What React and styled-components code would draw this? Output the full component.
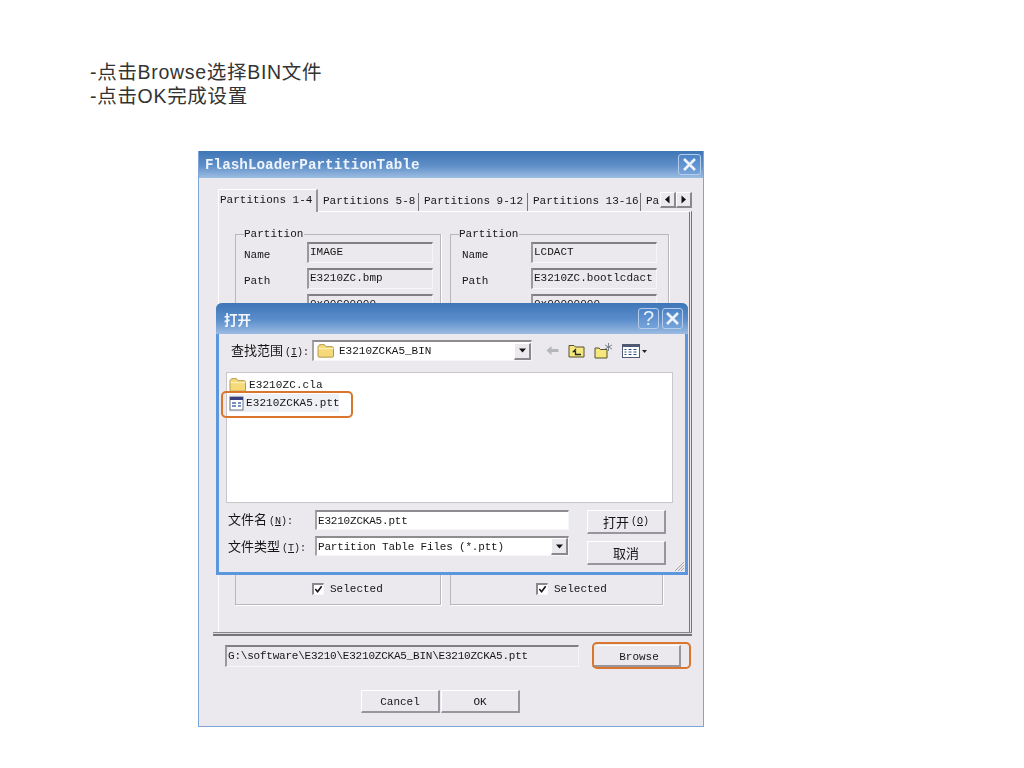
import React from 'react';
import styled, { createGlobalStyle, css } from 'styled-components';

const GlobalStyle = createGlobalStyle`
  html, body {
    margin: 0;
    padding: 0;
    background: #fff;
  }
`;

const mono = `"Liberation Mono", "Noto Sans CJK SC", monospace`;

const Page = styled.div`
  width: 1024px;
  height: 768px;
  padding: 60px 0 0 90px;
  box-sizing: border-box;
  overflow: hidden;
`;

const Instructions = styled.div`
  font-family: "Liberation Sans", "Noto Sans CJK SC", sans-serif;
  font-size: 19.5px;
  line-height: 24px;
  letter-spacing: 0.7px;
  color: #333;
`;

const Window = styled.div`
  position: relative;
  width: 506px;
  height: 576px;
  margin: 43px 0 0 108px;
  box-sizing: border-box;
  border: 1px solid #7da5d8;
  border-top: 0;
  background: #ebe9ed;
  font-family: ${mono};
  font-size: 11px;
  color: #151515;
  filter: blur(0.25px);
`;

const TitleBar = styled.div`
  display: flex;
  align-items: center;
  justify-content: space-between;
  height: 27px;
  padding: 0 2px 0 6px;
  background: linear-gradient(#3f76b6, #5f8fc8 55%, #9dbde2);
`;

const TitleText = styled.span`
  font-size: 14.3px;
  font-weight: bold;
  color: #eef4fb;
`;

const CaptionButton = styled.div`
  display: flex;
  align-items: center;
  justify-content: center;
  width: ${props => props.$width || 21}px;
  height: 21px;
  box-sizing: border-box;
  border: 1px solid #b4cdea;
  border-radius: 3px;
  background: linear-gradient(#4b83c8, #77a3da);
  color: #e8f0fa;
  font-family: "Liberation Sans", sans-serif;
  font-size: 20px;
`;

const TabStrip = styled.div`
  display: flex;
  align-items: flex-end;
  height: 23px;
  margin: 10px 0 0 19px;
  width: 474px;
`;

const Tab = styled.div`
  flex: none;
  width: ${props => props.$width}px;
  height: 18px;
  box-sizing: border-box;
  padding-left: 5px;
  line-height: 17px;
  white-space: nowrap;
  overflow: hidden;
  border-right: ${props => props.$last ? '0' : '1px solid #77757a'};
  ${props => props.$active && css`
    height: 23px;
    padding-left: 1px;
    line-height: 21px;
    margin-bottom: -1px;
    position: relative;
    background: #ebe9ed;
    border-top: 1px solid #fff;
    border-left: 1px solid #fff;
    border-right: 2px solid #98969c;
  `}
`;

const TabScroller = styled.div`
  display: flex;
  margin-left: auto;
  margin-bottom: 3px;
`;

const ScrollButton = styled.div`
  display: flex;
  align-items: center;
  justify-content: center;
  width: 16px;
  height: 16px;
  box-sizing: border-box;
  background: #ebe9ed;
  border-right: 2px solid #8a888d;
  border-bottom: 2px solid #8a888d;
  border-top: 1px solid #fff;
  border-left: 1px solid #fff;
`;

const TabPanel = styled.div`
  height: 421px;
  width: 474px;
  margin-left: 19px;
  box-sizing: border-box;
  padding: 15px 0 0 16px;
  border-top: 1px solid #fff;
  border-left: 1px solid #fff;
  border-right: 3px double #77757a;
`;

const PanelEdge = styled.div`
  width: 479px;
  height: 4px;
  margin-left: 14px;
  box-sizing: border-box;
  border-top: 1px solid #8a888c;
  border-bottom: 2px solid #77757a;
  background: #d8d6da;
`;

const GroupGrid = styled.div`
  display: grid;
  grid-template-columns: 206px 219px;
  grid-template-rows: 190px 183px;
  column-gap: 9px;
  row-gap: 5px;
`;

const GroupBox = styled.fieldset`
  margin: 0;
  padding: 0 8px;
  min-width: 0;
  border: 1px solid #b9b7bc;
  box-shadow: 1px 1px 0 #fff;
  ${props => props.$narrow && css`
    width: 213px;
    box-sizing: border-box;
  `}
`;

const Legend = styled.legend`
  padding: 0 1px 0 0;
  font-size: 11px;
  line-height: 14px;
`;

const FieldGrid = styled.div`
  display: grid;
  grid-template-columns: ${props => props.$labelWidth}px 126px;
  grid-auto-rows: 21px;
  row-gap: 5px;
  margin-top: 1px;
`;

const FieldLabel = styled.span`
  padding: 6px 0 0 ${props => props.$indent || 0}px;
  line-height: 14px;
`;

const Sunken = styled.div`
  box-sizing: border-box;
  padding-left: 1px;
  line-height: 17px;
  white-space: nowrap;
  overflow: hidden;
  border-top: 2px solid #808082;
  border-left: 2px solid #9a9a9c;
  border-right: 1px solid #f6f6f8;
  border-bottom: 1px solid #f6f6f8;
  background: #ebe9ed;
`;

const SelectedRow = styled.div`
  display: flex;
  align-items: center;
  gap: 6px;
  margin: 160px 0 0 ${props => props.$indent}px;
`;

const CheckBox = styled.div`
  display: flex;
  align-items: center;
  justify-content: center;
  width: 12px;
  height: 12px;
  box-sizing: border-box;
  border-top: 2px solid #8a8a8e;
  border-left: 2px solid #8a8a8e;
  border-right: 1px solid #f6f6f8;
  border-bottom: 1px solid #f6f6f8;
  background: #fff;
`;

const PathRow = styled.div`
  display: flex;
  align-items: flex-start;
  margin: 9px 0 0 26px;
`;

const PathInput = styled(Sunken)`
  width: 354px;
  height: 22px;
  line-height: 18px;
  letter-spacing: -0.22px;
`;

const ClassicButton = styled.div`
  display: flex;
  align-items: center;
  justify-content: center;
  width: ${props => props.$width}px;
  height: ${props => props.$height}px;
  box-sizing: border-box;
  padding-top: 2px;
  padding-left: ${props => props.$shift || 0}px;
  border-top: 1px solid #fff;
  border-left: 1px solid #fff;
  border-right: 2px solid #98969c;
  border-bottom: 2px solid #98969c;
  background: #ebe9ed;
  ${props => props.$cjk && css`
    padding-top: 0;
    font-size: 13px;
  `}
`;

const BrowseWrap = styled.div`
  position: relative;
  margin-left: 13px;
`;

const Highlight = styled.div`
  position: absolute;
  left: ${props => props.$left}px;
  top: ${props => props.$top}px;
  width: ${props => props.$width}px;
  height: ${props => props.$height}px;
  box-sizing: border-box;
  border: 2.5px solid #d9752c;
  border-radius: 5px;
`;

const ActionRow = styled.div`
  display: flex;
  gap: 1px;
  margin: 23px 0 0 162px;
`;

const Dialog = styled.div`
  position: absolute;
  left: 17px;
  top: 152px;
  width: 472px;
  height: 272px;
  box-sizing: border-box;
  border: 3px solid #5b97dc;
  border-top: 0;
  border-radius: 6px 6px 0 0;
  background: #ebe9ed;
  font-size: 11px;
`;

const DialogTitle = styled(TitleBar)`
  height: 31px;
  margin: 0 -3px;
  padding: 0 5px 0 8px;
  border-radius: 6px 6px 0 0;
  background: linear-gradient(#3f76b8, #5b8ecb 55%, #9bbbe2);
`;

const DialogTitleText = styled.span`
  font-family: "Noto Sans CJK SC", sans-serif;
  font-size: 13.5px;
  font-weight: bold;
  color: #f2f6fb;
`;

const CaptionGroup = styled.div`
  display: flex;
  gap: 3px;
`;

const LookInRow = styled.div`
  display: flex;
  align-items: center;
  height: 21px;
  margin: 6px 0 0 12px;
`;

const CjkLabel = styled.span`
  width: ${props => props.$width}px;
  flex: none;
  padding-bottom: ${props => props.$lift || 0}px;
  font-size: 13px;
  white-space: nowrap;
`;

const Accel = styled.span`
  margin-left: 2px;
  font-size: 10px;
`;

const Combo = styled.div`
  display: flex;
  align-items: center;
  gap: 4px;
  width: ${props => props.$width}px;
  height: ${props => props.$height}px;
  box-sizing: border-box;
  padding-left: ${props => props.$pad || 1}px;
  border-top: 2px solid #8d8d90;
  border-left: 2px solid #a3a3a6;
  border-right: 1px solid #f6f6f8;
  border-bottom: 1px solid #f6f6f8;
  background: #fff;
  letter-spacing: ${props => props.$spacing || 0}px;
  white-space: nowrap;
`;

const ComboArrow = styled(ScrollButton)`
  margin-left: auto;
  width: 17px;
  height: 17px;
  letter-spacing: 0;
`;

const Toolbar = styled.div`
  display: flex;
  align-items: center;
  gap: 9px;
  margin-left: 14px;
`;

const FileList = styled.div`
  width: 447px;
  height: 131px;
  margin: 11px 0 0 7px;
  box-sizing: border-box;
  padding: 3px 0 0 2px;
  background: #fff;
  border: 1px solid #c8c8cc;
`;

const FileRow = styled.div`
  display: flex;
  align-items: center;
  gap: 2px;
  height: 18px;
  font-size: 11px;
  white-space: nowrap;
  letter-spacing: 0.1px;
  svg {
    flex: none;
  }
  ${props => props.$selected && css`
    width: 110px;
    background: #eef0f5;
  `}
`;

const FormGrid = styled.div`
  display: grid;
  grid-template-columns: 87px 254px 79px;
  column-gap: 0;
  margin: 7px 0 0 9px;
`;

const FormFields = styled.div`
  display: grid;
  grid-column: 1 / 3;
  grid-template-columns: 87px 254px;
  grid-auto-rows: 20px;
  row-gap: 6px;
  align-items: center;
`;

const FormButtons = styled.div`
  display: flex;
  flex-direction: column;
  gap: 7px;
  margin-left: 18px;
`;

const Grip = styled.svg`
  position: absolute;
  right: 0;
  bottom: 0;
`;

const Folder = ({ size = 18 }) => (
  <svg width={size} height={size * 0.85} viewBox="0 0 18 15">
    <path d="M1 3.5 2.5 1.5h5L9 3.5h6.5l1 1V13a1 1 0 0 1-1 1H2a1 1 0 0 1-1-1z" fill="#f6d978" stroke="#b39a52" />
    <path d="M1.5 5.5h15" stroke="#fff4c4" />
  </svg>
);

const TableFile = () => (
  <svg width="15" height="15" viewBox="0 0 15 15">
    <rect x="1" y="1" width="13" height="13" fill="#fff" stroke="#6b6f88" />
    <rect x="1" y="1" width="13" height="3" fill="#3a3f82" />
    <path d="M3 7h4M9 7h3M3 10h4M9 10h3" stroke="#4a6fb0" strokeWidth="1.4" />
  </svg>
);

const BackArrow = () => (
  <svg width="13" height="11" viewBox="0 0 13 11">
    <path d="M0.5 5.5 5.5 1v3H12.5v3H5.5v3z" fill="#b4b6b8" />
  </svg>
);

const UpFolder = () => (
  <svg width="17" height="15" viewBox="0 0 17 15">
    <path d="M1 2.5h5L7.5 4H16v10H1z" fill="#f5e77e" stroke="#55502a" />
    <path d="M8 6 5.5 8.5H7.5V11.5H13" fill="none" stroke="#1e2a1e" strokeWidth="1.3" />
  </svg>
);

const NewFolder = () => (
  <svg width="19" height="17" viewBox="0 0 19 17">
    <path d="M1 6h4l1.500 1.500H13V16H1z" fill="#f5e77e" stroke="#55502a" />
    <path d="M14.500 1v8M11 3l7 4M18 3l-7 4" stroke="#6f7a86" strokeWidth="0.9" />
  </svg>
);

const ViewMenu = () => (
  <svg width="26" height="14" viewBox="0 0 26 14">
    <rect x="0.500" y="0.500" width="17" height="13" fill="#fff" stroke="#4e5a72" />
    <rect x="0.500" y="0.500" width="17" height="2.500" fill="#4e5a72" />
    <path d="M2.500 5.500h2M6.500 5.500h3M11.500 5.500h3M2.500 8h2M6.500 8h3M11.500 8h3M2.500 10.500h2M6.500 10.500h3M11.500 10.500h3" stroke="#31508e" />
    <path d="M20 6h5l-2.500 3z" fill="#222" />
  </svg>
);

const Arrow = ({ dir }) => (
  <svg width="7" height="9" viewBox="0 0 7 9">
    {dir === 'left' && <path d="M5.500 0.500v8L1 4.500z" fill="#111" />}
    {dir === 'right' && <path d="M1.500 0.500v8L6 4.500z" fill="#111" />}
    {dir === 'down' && <path d="M0 2.500h7L3.500 6.500z" fill="#111" />}
  </svg>
);

const Check = () => (
  <svg width="9" height="9" viewBox="0 0 10 10">
    <path d="M1.500 4.500 4 7.500 8.500 1.500" fill="none" stroke="#111" strokeWidth="1.8" />
  </svg>
);

const CloseIcon = ({ size = 15 }) => (
  <svg width={size} height={size} viewBox="0 0 15 15">
    <path d="M2 2 13 13M13 2 2 13" stroke="#eef4fb" strokeWidth="2.600" />
  </svg>
);

const Fields = ({ labelWidth, indent, name, path, address }) => (
  <FieldGrid $labelWidth={labelWidth}>
    <FieldLabel $indent={indent}>Name</FieldLabel>
    <Sunken>{name}</Sunken>
    <FieldLabel $indent={indent}>Path</FieldLabel>
    <Sunken>{path}</Sunken>
    <span />
    <Sunken>{address}</Sunken>
  </FieldGrid>
);

const App = () => (
  <Page>
    <GlobalStyle />
    <Instructions>
      <div>-点击Browse选择BIN文件</div>
      <div>-点击OK完成设置</div>
    </Instructions>

    <Window>
      <TitleBar>
        <TitleText>FlashLoaderPartitionTable</TitleText>
        <CaptionButton $width={23}><CloseIcon /></CaptionButton>
      </TitleBar>

      <TabStrip>
        <Tab $active $width={100}>Partitions 1-4</Tab>
        <Tab $width={101}>Partitions 5-8</Tab>
        <Tab $width={109}>Partitions 9-12</Tab>
        <Tab $width={113}>Partitions 13-16</Tab>
        <Tab $last $width={19}>Pa</Tab>
        <TabScroller>
          <ScrollButton><Arrow dir="left" /></ScrollButton>
          <ScrollButton><Arrow dir="right" /></ScrollButton>
        </TabScroller>
      </TabStrip>

      <TabPanel>
        <GroupGrid>
          <GroupBox>
            <Legend>Partition</Legend>
            <Fields labelWidth={63} name="IMAGE" path="E3210ZC.bmp" address="0x00C00000" />
          </GroupBox>
          <GroupBox>
            <Legend>Partition</Legend>
            <Fields labelWidth={72} indent={3} name="LCDACT" path="E3210ZC.bootlcdact" address="0x00000000" />
          </GroupBox>
          <GroupBox>
            <SelectedRow $indent={68}><CheckBox><Check /></CheckBox>Selected</SelectedRow>
          </GroupBox>
          <GroupBox $narrow>
            <SelectedRow $indent={77}><CheckBox><Check /></CheckBox>Selected</SelectedRow>
          </GroupBox>
        </GroupGrid>
      </TabPanel>
      <PanelEdge />

      <PathRow>
        <PathInput>G:\software\E3210\E3210ZCKA5_BIN\E3210ZCKA5.ptt</PathInput>
        <BrowseWrap>
          <ClassicButton $width={89} $height={22} $shift={6}>Browse</ClassicButton>
          <Highlight $left={0} $top={-3} $width={99} $height={27} />
        </BrowseWrap>
      </PathRow>

      <ActionRow>
        <ClassicButton $width={79} $height={23}>Cancel</ClassicButton>
        <ClassicButton $width={79} $height={23}>OK</ClassicButton>
      </ActionRow>

      <Dialog>
        <DialogTitle>
          <DialogTitleText>打开</DialogTitleText>
          <CaptionGroup>
            <CaptionButton>?</CaptionButton>
            <CaptionButton><CloseIcon /></CaptionButton>
          </CaptionGroup>
        </DialogTitle>

        <LookInRow>
          <CjkLabel $width={81} $lift={2}>查找范围<Accel>(<u>I</u>):</Accel></CjkLabel>
          <Combo $width={220} $height={21} $pad={3}>
            <Folder />
            E3210ZCKA5_BIN
            <ComboArrow><Arrow dir="down" /></ComboArrow>
          </Combo>
          <Toolbar>
            <BackArrow />
            <UpFolder />
            <NewFolder />
            <ViewMenu />
          </Toolbar>
        </LookInRow>

        <FileList>
          <FileRow><Folder />E3210ZC.cla</FileRow>
          <FileRow $selected><TableFile />E3210ZCKA5.ptt</FileRow>
        </FileList>
        <Highlight $left={2} $top={88} $width={132} $height={27} />

        <FormGrid>
          <FormFields>
            <CjkLabel $width={87} $lift={3}>文件名<Accel>(<u>N</u>):</Accel></CjkLabel>
            <Combo $width={254} $height={20} $pad={1} $spacing={-0.2}>E3210ZCKA5.ptt</Combo>
            <CjkLabel $width={87} $lift={2}>文件类型<Accel>(<u>T</u>):</Accel></CjkLabel>
            <Combo $width={254} $height={20} $pad={1} $spacing={-0.19}>
              Partition Table Files (*.ptt)
              <ComboArrow><Arrow dir="down" /></ComboArrow>
            </Combo>
          </FormFields>
          <FormButtons>
            <ClassicButton $cjk $width={79} $height={24}>打开<Accel>(<u>O</u>)</Accel></ClassicButton>
            <ClassicButton $cjk $width={79} $height={24}>取消</ClassicButton>
          </FormButtons>
        </FormGrid>

        <Grip width="12" height="12" viewBox="0 0 12 12">
          <path d="M11 2 2 11M11 5 5 11M11 8 8 11" stroke="#a5a5a8" />
        </Grip>
      </Dialog>
    </Window>
  </Page>
);

export default App;
